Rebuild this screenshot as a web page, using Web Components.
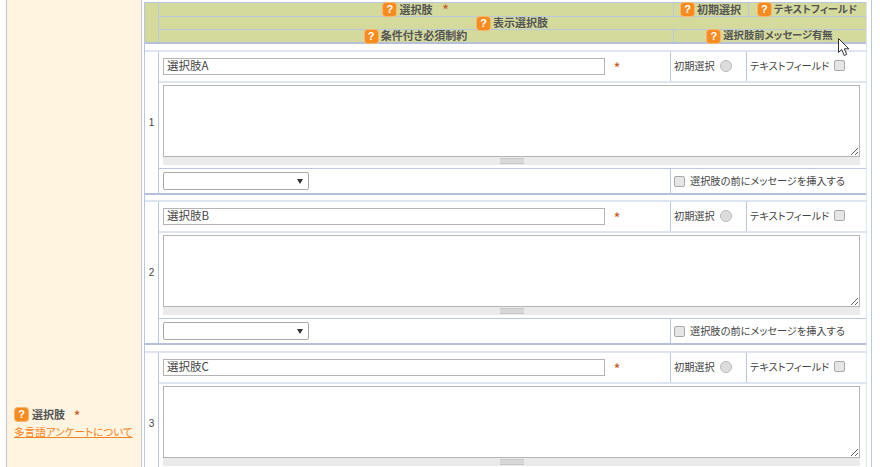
<!DOCTYPE html>
<html lang="ja">
<head>
<meta charset="utf-8">
<title>選択肢</title>
<style>
  html, body { margin: 0; height: 467px; overflow: hidden; background: #fff; }
  body { font-family: "Noto Sans CJK JP", "Liberation Sans", sans-serif; color: #444; }
</style>
</head>
<body>
<survey-form>
  <survey-label slot="label"></survey-label>
  <choice-header></choice-header>
  <choice-block index="1" label="選択肢A" gap="8"></choice-block>
  <choice-block index="2" label="選択肢B" gap="7"></choice-block>
  <choice-block index="3" label="選択肢C" gap="8" cut></choice-block>
</survey-form>

<script>
class HelpIcon extends HTMLElement {
  constructor() {
    super();
    this.attachShadow({ mode: "open" });
    this.shadowRoot.innerHTML = `
<style>
  :host {
    display: inline-flex;
    align-items: center;
    justify-content: center;
    width: 13px;
    height: 13px;
    border-radius: 3px;
    background: #f68b1f;
    box-shadow: 0 0 0 1px #f9b56f;
    color: #fff;
    font: bold 11px/13px "Liberation Sans", sans-serif;
    flex: none;
  }
</style>?`;
  }
}

class SurveyLabel extends HTMLElement {
  constructor() {
    super();
    this.attachShadow({ mode: "open" });
    this.shadowRoot.innerHTML = `
<style>
  :host {
    display: block;
    padding: 407px 0 0 8px;
    font-size: 11px;
    font-feature-settings: "palt";
  }
  .title {
    display: flex;
    align-items: center;
    gap: 4px;
    height: 14px;
    font-weight: bold;
    color: #555;
  }
  .req { color: #c8622a; margin-left: 5px; font-size: 12px; }
  a {
    display: block;
    margin: 4px 0 0 -1px;
    font-size: 10.6px;
    line-height: 14px;
    color: #f58220;
    text-decoration: underline;
    white-space: nowrap;
  }
</style>
<div class="title"><help-icon></help-icon><span>選択肢</span><span class="req">*</span></div>
<a href="#">多言語アンケートについて</a>`;
  }
}

class SurveyForm extends HTMLElement {
  constructor() {
    super();
    this.attachShadow({ mode: "open" });
    this.shadowRoot.innerHTML = `
<style>
  :host {
    display: flex;
    box-sizing: border-box;
    width: 866px;
    height: 467px;
    margin-left: 6px;
    border-left: 1px solid #b9c7e0;
    border-right: 1px solid #b9c7e0;
    overflow: hidden;
  }
  .side {
    width: 134px;
    flex: none;
    background: #fef4df;
    border-right: 1px solid #b9c7e0;
  }
  .main {
    flex: 1;
    padding: 2px 4px 0 2px;
    min-width: 0;
  }
  .table {
    border-left: 1px solid #b9c7e0;
    border-right: 1px solid #dfe5f0;
  }
</style>
<div class="side"><slot name="label"></slot></div>
<div class="main"><div class="table"><slot></slot></div></div>`;
  }
}

class ChoiceHeader extends HTMLElement {
  constructor() {
    super();
    this.attachShadow({ mode: "open" });
    this.shadowRoot.innerHTML = `
<style>
  :host {
    display: grid;
    grid-template-columns: 14px 514px 75px 1fr;
    grid-template-rows: 14px 13px 12px;
    background: #d4da9c;
    border-top: 1px solid #b9c7e0;
    border-bottom: 2px solid #b5c1da;
    font-size: 11px;
    font-weight: bold;
    color: #555;
    font-feature-settings: "palt";
  }
  .num { grid-row: 1 / 4; border-right: 1px solid #b9c7e0; }
  .cell {
    display: flex;
    align-items: center;
    justify-content: center;
    gap: 3px;
    white-space: nowrap;
    line-height: 12px;
    border-bottom: 1px solid #b9c7e0;
  }
  .cell span { position: relative; top: -1px; }
  .cell.last { border-bottom: 0; }
  .cell.sep { border-left: 1px solid #b9c7e0; }
  .kana { font-size: 10.3px; }
  .wide { grid-column: 2 / 5; }
  .end { grid-column: 3 / 5; }
  .req { color: #c8622a; margin-left: 7px; font-size: 12px; }
</style>
<div class="num"></div>
<div class="cell"><help-icon></help-icon><span>選択肢</span><span class="req">*</span></div>
<div class="cell sep"><help-icon></help-icon><span>初期選択</span></div>
<div class="cell sep kana"><help-icon></help-icon><span>テキストフィールド</span></div>
<div class="cell wide"><help-icon></help-icon><span>表示選択肢</span></div>
<div class="cell last"><help-icon></help-icon><span>条件付き必須制約</span></div>
<div class="cell last sep end kana"><help-icon></help-icon><span>選択肢前メッセージ有無</span></div>`;
  }
}

class ChoiceBlock extends HTMLElement {
  constructor() {
    super();
    this.attachShadow({ mode: "open" });
  }

  connectedCallback() {
    const gap = this.getAttribute("gap") || 8;
    // the third block runs off the bottom of the window, its last row is never seen
    const opts = this.hasAttribute("cut") ? `<div class="opts"></div>` : `
    <div class="opts">
      <div class="cond"><div class="select"></div></div>
      <div class="msg"><input type="checkbox" disabled><span>選択肢の前にメッセージを挿入する</span></div>
    </div>`;
    this.shadowRoot.innerHTML = `
<style>
  :host {
    display: block;
    font-size: 10.2px;
    color: #444;
    font-feature-settings: "palt";
  }
  .gap { height: ${gap - 1}px; border-bottom: 2px solid #dfe5f0; margin-top: -1px; }
  .body { display: flex; border-bottom: 2px solid #b5c1da; }
  .num {
    width: 13px;
    flex: none;
    display: flex;
    align-items: center;
    justify-content: center;
    border-right: 1px solid #b9c7e0;
    font: 10px "Liberation Sans", sans-serif;
    padding-bottom: 1px;
    box-sizing: content-box;
  }
  .rows { flex: 1; min-width: 0; }
  .top {
    display: grid;
    grid-template-columns: 512px 75px 1fr;
    height: 29px;
    border-bottom: 2px solid #dfe5f0;
    box-sizing: content-box;
  }
  .top > div { display: flex; align-items: center; white-space: nowrap; }
  .name { padding-left: 4px; border-right: 1px solid #b9c7e0; }
  .text {
    box-sizing: border-box;
    width: 442px;
    height: 17px;
    border: 1px solid #b4b4b4;
    padding-left: 3px;
    font-size: 11.5px;
    line-height: 13px;
    font-feature-settings: normal;
    color: #444;
  }
  .req { color: #c8622a; font-weight: bold; font-size: 12px; margin-left: 9px; }
  .flag { justify-content: flex-start; padding: 0 0 2px 3px; gap: 5px; }
  .flag + .flag { border-left: 1px solid #b9c7e0; }
  .area { padding: 2px 6px 0 4px; border-bottom: 1px solid #b9c7e0; height: 83px; box-sizing: content-box; }
  textarea {
    display: block;
    box-sizing: border-box;
    width: 100%;
    height: 72px;
    margin: 0;
    border: 1px solid #b4b4b4;
    border-radius: 0;
    outline: 0;
    resize: vertical;
    background: #fff;
  }
  .grip {
    height: 8px;
    background: #ebebeb;
    display: flex;
    align-items: center;
    justify-content: center;
  }
  .grip::before {
    content: "";
    width: 24px;
    height: 4px;
    border-top: 1px solid #c8c8c8;
    border-bottom: 1px solid #c8c8c8;
    background: #d8d8d8;
  }
  .opts {
    display: grid;
    grid-template-columns: 512px 1fr;
    height: 24px;
  }
  .opts > div { display: flex; align-items: center; }
  .cond { padding-left: 4px; border-right: 1px solid #b9c7e0; }
  .select {
    position: relative;
    box-sizing: border-box;
    width: 146px;
    height: 18px;
    border: 1px solid #aaa;
    border-radius: 2px;
    background: #fff;
  }
  .select::after {
    content: "";
    position: absolute;
    right: 5px;
    top: 6px;
    border: 3px solid transparent;
    border-top: 5px solid #333;
    border-bottom: 0;
  }
  .msg { padding-left: 3px; gap: 5px; }
  .msg span { padding-bottom: 2px; }
  input {
    appearance: none;
    box-sizing: border-box;
    width: 11px;
    height: 11px;
    margin: 0;
    border: 1px solid #a9a9a9;
    background: #e6e6e6;
    flex: none;
  }
  input[type="checkbox"] { border-radius: 2px; }
  input[type="radio"] { border-radius: 50%; width: 12px; height: 12px; border-color: #bbb; background: #ddd; }
</style>
<div class="gap"></div>
<div class="body">
  <div class="num">${this.getAttribute("index")}</div>
  <div class="rows">
    <div class="top">
      <div class="name"><div class="text">${this.getAttribute("label")}</div><span class="req">*</span></div>
      <div class="flag">初期選択<input type="radio" disabled></div>
      <div class="flag">テキストフィールド<input type="checkbox" disabled></div>
    </div>
    <div class="area"><textarea></textarea><div class="grip"></div></div>${opts}
  </div>
</div>`;
  }
}

class MouseCursor extends HTMLElement {
  constructor() {
    super();
    this.attachShadow({ mode: "open" });
    this.shadowRoot.innerHTML = `
<style>
  :host { position: absolute; left: 838px; top: 38px; width: 12px; height: 19px; }
  svg { display: block; }
</style>
<svg width="12" height="19" viewBox="0 0 12 19">
  <path d="M.5.5V14.5L3.7 11.5 6.2 17.5 8.7 16.4 6.3 10.8H10.8Z" fill="#fff" stroke="#333" stroke-width="1"/>
</svg>`;
  }
}

customElements.define("help-icon", HelpIcon);
customElements.define("survey-label", SurveyLabel);
customElements.define("survey-form", SurveyForm);
customElements.define("choice-header", ChoiceHeader);
customElements.define("choice-block", ChoiceBlock);
customElements.define("mouse-cursor", MouseCursor);

document.body.appendChild(document.createElement("mouse-cursor"));
</script>
</body>
</html>
